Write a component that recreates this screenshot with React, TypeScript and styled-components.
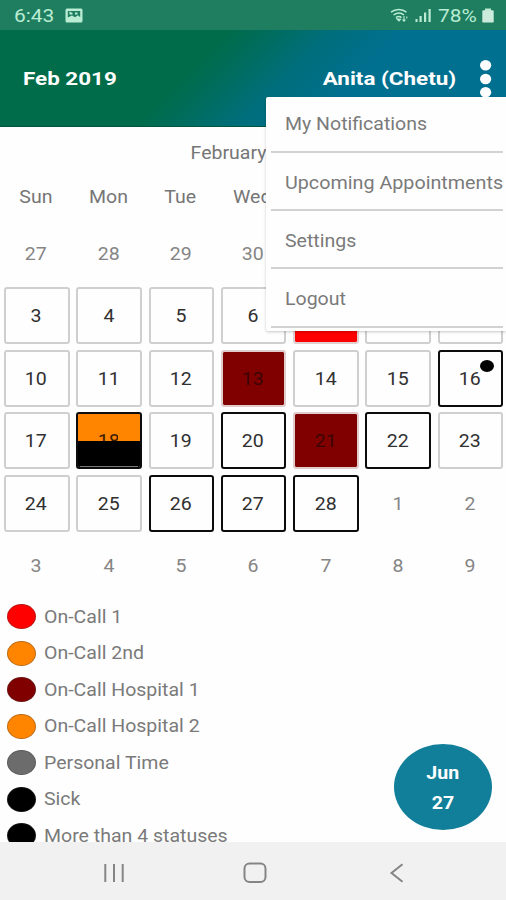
import React from "react";
import styled, { createGlobalStyle } from "styled-components";

const GlobalStyle = createGlobalStyle`
  * { box-sizing: border-box; }
  body { margin: 0; background: #fefefe; font-family: Roboto, "Noto Sans", sans-serif; }
`;

const Screen = styled.div`
  position: relative;
  display: flex;
  flex-direction: column;
  width: 506px;
  height: 900px;
  overflow: hidden;
  background: #fefefe;
`;

const Wide = styled.span<{ $origin?: string; $x?: number }>`
  display: inline-block;
  white-space: nowrap;
  transform: scaleX(${(p) => p.$x ?? 1.115});
  transform-origin: ${(p) => p.$origin ?? "center"} center;
`;

const StatusBar = styled.div`
  flex: none;
  display: flex;
  align-items: center;
  height: 30px;
  padding: 1px 12px 0 14px;
  background: #1f7e60;
  color: #b9ecd3;
  font-size: 18px;
  line-height: 30px;
`;

const Clock = styled.div`
  width: 51px;
`;

const StatusIcons = styled.div`
  display: flex;
  align-items: center;
  gap: 6px;
  margin-left: auto;
`;

const Battery = styled.div`
  width: 38px;
`;

const Header = styled.header`
  flex: none;
  display: flex;
  align-items: center;
  height: 97px;
  padding: 1px 14px 0 23px;
  background: linear-gradient(135deg, #006c49 38%, #006e7a 55%, #007091 68%);
  border-bottom: 1px solid #00563f;
  color: #fff;
  font-size: 19px;
  font-weight: 700;
`;

const UserName = styled.div`
  margin-left: auto;
  margin-right: 24px;
`;

const Calendar = styled.main`
  flex: none;
  padding: 12px 2px 0 4px;
  color: #767676;
  font-size: 17.5px;
`;

const MonthTitle = styled.div`
  height: 28px;
  margin-right: 2px;
  line-height: 28px;
  text-align: center;
`;

const Week = styled.div`
  display: grid;
  grid-template-columns: repeat(7, 65.5px);
  column-gap: 6.8px;
`;

const WeekdayRow = styled(Week)`
  height: 58px;
  margin-left: -1px;
  line-height: 60px;
  text-align: center;
`;

const Days = styled(Week)`
  grid-auto-rows: 57px;
  row-gap: 5.4px;
`;

type Kind = "outside" | "plain" | "marked" | "oncall" | "hospital" | "split";

const borders: Record<Kind, string> = {
  outside: "transparent",
  plain: "#cfcfcf",
  marked: "#0c0c0c",
  oncall: "#e0d0d0",
  hospital: "#e0cccc",
  split: "#0c0c0c",
};

const fills: Record<Kind, string> = {
  outside: "transparent",
  plain: "#fefefe",
  marked: "#fefefe",
  oncall: "#fe0000",
  hospital: "#800000",
  split: "linear-gradient(#ff8400 0 27px, #000 27px)",
};

const Day = styled.div<{ $kind: Kind }>`
  position: relative;
  display: flex;
  align-items: center;
  justify-content: center;
  padding: 1px 1px 0 0;
  border: 2px solid ${(p) => borders[p.$kind]};
  border-radius: 3px;
  background: ${(p) => fills[p.$kind]};
  background-clip: padding-box;
  color: ${(p) => (p.$kind === "outside" ? "#858585" : p.$kind === "hospital" ? "#3c0505" : "#303030")};
  font-size: 17.5px;
`;

const CutNumber = styled.div`
  align-self: flex-start;
  height: 26px;
  padding-top: 16px;
  line-height: 21px;
  overflow: hidden;
  color: #3a1c00;
`;

const SplitEdge = styled.div`
  position: absolute;
  left: 2px;
  right: 2px;
  bottom: 0;
  height: 1px;
  background: #777;
`;

const Mark = styled.div`
  position: absolute;
  top: 8.5px;
  right: 7px;
  width: 14px;
  height: 12px;
  border-radius: 50%;
  background: #000;
`;

const Legend = styled.ul`
  flex: 1;
  min-height: 0;
  margin: 0;
  padding: 4.5px 0 0 7px;
  list-style: none;
  overflow: hidden;
  color: #7a7a7a;
  font-size: 17.5px;
`;

const LegendItem = styled.li`
  display: flex;
  align-items: center;
  gap: 8px;
  height: 36.5px;
`;

const Swatch = styled.span<{ $color: string }>`
  width: 28.5px;
  height: 25px;
  border-radius: 50%;
  border: 1px solid rgba(60, 60, 60, 0.35);
  background: ${(p) => p.$color};
`;

const NavBar = styled.nav`
  flex: none;
  display: flex;
  align-items: center;
  height: 58px;
  padding: 4px 101px 0 103px;
  gap: 118px;
  background: #f1f1f1;
`;

const Menu = styled.div`
  position: absolute;
  top: 97px;
  left: 266px;
  width: 240px;
  height: 234px;
  padding: 0 3px 0 5px;
  border-radius: 2px 0 0 2px;
  background: #fefefe;
  box-shadow: 0 1px 3px rgba(0, 0, 0, 0.22);
  color: #7a7a7a;
  font-size: 17.5px;
`;

const MenuItem = styled.div<{ $first?: boolean }>`
  display: flex;
  align-items: center;
  height: ${(p) => (p.$first ? 56 : 58.2)}px;
  padding: ${(p) => (p.$first ? "0 0 1px" : "3px 0 0")} 14px;
  border-bottom: 2px solid #d2d2d2;
`;

const DateButton = styled.div`
  position: absolute;
  left: 394px;
  top: 744px;
  display: flex;
  flex-direction: column;
  align-items: center;
  justify-content: center;
  width: 98px;
  height: 86px;
  padding-top: 2px;
  border-radius: 50%;
  background: #117f99;
  color: #fff;
  font-size: 17.5px;
  font-weight: 700;
  line-height: 30px;
`;

const weekdays = ["Sun", "Mon", "Tue", "Wed", "Thu", "Fri", "Sat"];

const kinds: Record<number, Kind> = {
  7: "oncall",
  13: "hospital",
  18: "split",
  21: "hospital",
  16: "marked",
  20: "marked",
  22: "marked",
  26: "marked",
  27: "marked",
  28: "marked",
};

const days: { n: number; kind: Kind }[] = [
  ...[27, 28, 29, 30, 31].map((n) => ({ n, kind: "outside" as Kind })),
  ...[1, 2].map((n) => ({ n, kind: "plain" as Kind })),
  ...Array.from({ length: 26 }, (_, i) => ({ n: i + 3, kind: kinds[i + 3] ?? ("plain" as Kind) })),
  ...Array.from({ length: 9 }, (_, i) => ({ n: i + 1, kind: "outside" as Kind })),
];

const legend: { label: string; color: string }[] = [
  { label: "On-Call 1", color: "#fe0000" },
  { label: "On-Call 2nd", color: "#ff8400" },
  { label: "On-Call Hospital 1", color: "#800000" },
  { label: "On-Call Hospital 2", color: "#ff8400" },
  { label: "Personal Time", color: "#6c6c6c" },
  { label: "Sick", color: "#000" },
  { label: "More than 4 statuses", color: "#000" },
];

const menuItems = ["My Notifications", "Upcoming Appointments", "Settings", "Logout"];

const PictureIcon = () => (
  <svg width="18" height="15" viewBox="0 0 18 15">
    <rect x="0.5" y="0.5" width="17" height="14" rx="1.5" fill="#b9ecd3" />
    <path d="M2.8 3h12.4v6.2l-2.2-2-3 2L7 7.6 2.8 9.4z" fill="#1f7e60" />
    <path d="M4.5 3.6v3h3v-1.6zM10 4.5h2.5v2H10z" fill="#b9ecd3" />
  </svg>
);

const WifiIcon = () => (
  <svg width="19" height="15" viewBox="0 0 19 15" fill="none" stroke="#b9ecd3" strokeWidth="1.5">
    <path d="M1 4.2C5.5 0.6 12 0.6 16.5 4.2M3.5 7C7 4.4 11 4.4 14 7M6 9.6C8 8.2 9.8 8.2 11.5 9.6" />
    <path d="M7 11l2 2 1.5-1.8zM14 8v5M12.5 11.6l1.5 1.6 1.5-1.6M16.8 8.5v2" strokeWidth="1.1" />
  </svg>
);

const SignalIcon = () => (
  <svg width="17" height="15" viewBox="0 0 17 15" fill="#b9ecd3">
    <rect x="0.5" y="11" width="2" height="3" />
    <rect x="4.5" y="8" width="2.2" height="6" />
    <rect x="9" y="4.5" width="2.2" height="9.5" />
    <rect x="13.5" y="1" width="2.2" height="13" />
  </svg>
);

const BatteryIcon = () => (
  <svg width="12" height="15" viewBox="0 0 12 15">
    <rect x="3" y="0.5" width="6" height="3" fill="#b9ecd3" />
    <rect x="0.3" y="2.2" width="11.4" height="12.4" rx="1.2" fill="#cdebdc" />
  </svg>
);

const MoreIcon = () => (
  <svg width="12" height="38" viewBox="0 0 12 38" fill="#fff">
    <ellipse cx="5.6" cy="5.3" rx="5.6" ry="5.2" />
    <ellipse cx="5.6" cy="19" rx="5.6" ry="5.2" />
    <ellipse cx="5.6" cy="32.3" rx="5.6" ry="5.2" />
  </svg>
);

export default function App() {
  return (
    <>
      <GlobalStyle />
      <Screen>
        <StatusBar>
          <Clock>
            <Wide $origin="left" $x={1.16}>6:43</Wide>
          </Clock>
          <PictureIcon />
          <StatusIcons>
            <WifiIcon />
            <SignalIcon />
            <Battery>
              <Wide $origin="left" $x={1.16}>78%</Wide>
            </Battery>
            <BatteryIcon />
          </StatusIcons>
        </StatusBar>
        <Header>
          <Wide $origin="left" $x={1.18}>Feb 2019</Wide>
          <UserName>
            <Wide $origin="right" $x={1.18}>Anita (Chetu)</Wide>
          </UserName>
          <MoreIcon />
        </Header>
        <Calendar>
          <MonthTitle>
            <Wide>February 2019</Wide>
          </MonthTitle>
          <WeekdayRow>
            {weekdays.map((d) => (
              <div key={d}>
                <Wide>{d}</Wide>
              </div>
            ))}
          </WeekdayRow>
          <Days>
            {days.map(({ n, kind }, i) => (
              <Day key={i} $kind={kind}>
                {kind === "split" ? (
                  <>
                    <CutNumber>
                      <Wide>{n}</Wide>
                    </CutNumber>
                    <SplitEdge />
                  </>
                ) : (
                  <Wide>{n}</Wide>
                )}
                {n === 16 && <Mark />}
              </Day>
            ))}
          </Days>
        </Calendar>
        <Legend>
          {legend.map((l) => (
            <LegendItem key={l.label}>
              <Swatch $color={l.color} />
              <Wide $origin="left">{l.label}</Wide>
            </LegendItem>
          ))}
        </Legend>
        <NavBar>
          <svg width="22" height="20" viewBox="0 0 22 20" stroke="#858585" strokeWidth="2">
            <path d="M2.3 1v18M11 1v18M19.7 1v18" />
          </svg>
          <svg width="24" height="22" viewBox="0 0 24 22" fill="none" stroke="#858585" strokeWidth="2">
            <rect x="1.5" y="1.5" width="21" height="18.5" rx="5" />
          </svg>
          <svg width="20" height="20" viewBox="0 0 20 20" fill="none" stroke="#858585" strokeWidth="2">
            <path d="M17.5 1.2L6.5 10l11 8.8" />
          </svg>
        </NavBar>
        <Menu>
          {menuItems.map((m, i) => (
            <MenuItem key={m} $first={i === 0}>
              <Wide $origin="left" $x={i === 1 ? 1.127 : 1.115}>{m}</Wide>
            </MenuItem>
          ))}
        </Menu>
        <DateButton>
          <Wide>Jun</Wide>
          <Wide>27</Wide>
        </DateButton>
      </Screen>
    </>
  );
}
